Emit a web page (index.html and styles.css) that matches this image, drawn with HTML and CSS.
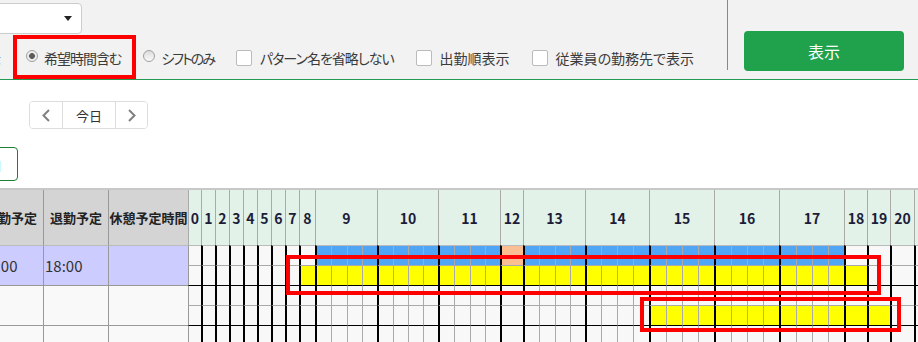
FILE: index.html
```html
<!DOCTYPE html>
<html lang="ja">
<head>
  <meta charset="UTF-8" />
  <meta name="viewport" content="width=device-width, initial-scale=1.0"/>
  <title>シフト表</title>
  <link rel="stylesheet" href="styles.css">
</head>
<body>
  <div class="page">

    <!-- 検索条件 -->
    <div class="filter-bar">
      <div class="filters">
        <div class="select-box"><span class="caret"></span></div>
        <div class="options">
          <span class="opt-label">表示</span>
          <label class="opt tight"><input type="radio" name="mode" checked />希望時間含む</label>
          <label class="opt tighter"><input type="radio" name="mode" />シフトのみ</label>
          <label class="opt box tight"><input type="checkbox" />パターン名を省略しない</label>
          <label class="opt box"><input type="checkbox" />出勤順表示</label>
          <label class="opt box"><input type="checkbox" />従業員の勤務先で表示</label>
        </div>
      </div>
      <div class="divider"></div>
      <div class="actions">
        <button class="btn-show">表示</button>
      </div>
    </div>

    <!-- 日付ナビ -->
    <div class="date-nav">
      <button class="nav-btn">
        <svg width="8" height="13" viewBox="0 0 8 13"><polyline points="7,1 1.5,6.5 7,12" fill="none" stroke="#808080" stroke-width="2"/></svg>
      </button>
      <button class="nav-btn today">今日</button>
      <button class="nav-btn">
        <svg width="8" height="13" viewBox="0 0 8 13"><polyline points="1,1 6.5,6.5 1,12" fill="none" stroke="#808080" stroke-width="2"/></svg>
      </button>
    </div>

    <div class="sub-actions">
      <button class="btn-outline">追加</button>
    </div>

    <!-- シフト表 -->
    <div class="schedule">
      <div class="staff">
        <div class="th">出勤予定</div>
        <div class="th">退勤予定</div>
        <div class="th">休憩予定時間</div>

        <div class="td plan">09:00</div>
        <div class="td plan">18:00</div>
        <div class="td plan"></div>

        <div class="td"></div>
        <div class="td"></div>
        <div class="td"></div>

        <div class="td"></div>
        <div class="td"></div>
        <div class="td"></div>
      </div>
      <div class="gantt" id="gantt"></div>
    </div>

    <!-- 注目枠 -->
    <div class="mark mark-option"></div>
    <div class="mark mark-row1"></div>
    <div class="mark mark-row2"></div>
  </div>

  <script>
    // hour, width(px), number of 15min cells
    const hours = [
      [0, 13, 1], [1, 14, 1], [2, 14, 1], [3, 14, 1], [4, 14, 1], [5, 14, 1],
      [6, 14, 1], [7, 14, 1], [8, 16, 1], [9, 62, 4], [10, 61, 4], [11, 62, 4],
      [12, 23, 1], [13, 62, 4], [14, 64, 4], [15, 65, 4], [16, 65, 4], [17, 65, 4],
      [18, 23, 1], [19, 23, 1], [20, 24, 1], [21, 30, 1]
    ];

    // two lines per employee: 希望 / 予定
    const rows = [
      [{ from: 9, to: 18, cls: "blue" }, { from: 12, to: 13, cls: "orange" }],
      [{ from: 8, to: 19, cls: "yellow" }],
      [],
      [{ from: 15, to: 20, cls: "yellow" }],
      [],
      []
    ];

    const gantt = document.getElementById("gantt");
    const cols = [];

    hours.forEach(([h, w, n]) => {
      const base = Math.floor(w / n);
      let rest = w - base * n;
      for (let i = 0; i < n; i++) {
        cols.push((base + (rest > 0 ? 1 : 0)) + "px");
        rest--;
      }
      const head = document.createElement("div");
      head.className = "hh";
      head.textContent = h;
      head.style.gridColumn = "span " + n;
      gantt.appendChild(head);
    });
    gantt.style.gridTemplateColumns = cols.join(" ");

    rows.forEach((bars, ri) => {
      hours.forEach(([h, w, n]) => {
        let color = "";
        bars.forEach(b => {
          if (h >= b.from && h < b.to) color = b.cls;
        });
        for (let i = 0; i < n; i++) {
          const cell = document.createElement("div");
          cell.className = "c";
          if (i === 0) cell.classList.add(h === 0 ? "first" : "hs");
          if (ri === 0) cell.classList.add("r1");
          else if (ri % 2 === 0) cell.classList.add("rt");
          if (color) cell.classList.add(color);
          gantt.appendChild(cell);
        }
      });
    });
  </script>
</body>
</html>
```

FILE: styles.css
```css
* {
  box-sizing: border-box;
}

html,
body {
  margin: 0;
  overflow: hidden;
}

body {
  font-family: "Noto Sans CJK JP", "Noto Sans", sans-serif;
  font-feature-settings: "palt";
  font-size: 14px;
  color: #333;
  background: #fff;
}

.page {
  position: relative;
  width: 918px;
  height: 342px;
  overflow: hidden;
}

/* filter bar */
.filter-bar {
  display: flex;
  height: 80px;
  background: #f2f2f2;
  border-bottom: 1px solid #239a52;
}

.filters {
  flex: 1;
  min-width: 0;
}

.select-box {
  display: flex;
  align-items: center;
  justify-content: flex-end;
  width: 120px;
  height: 31px;
  margin: 3px 0 0 -38px;
  padding-right: 9px;
  background: #fff;
  border: 1px solid #ccc;
  border-radius: 4px;
}

.caret {
  width: 0;
  height: 0;
  border-left: 4px solid transparent;
  border-right: 4px solid transparent;
  border-top: 5px solid #222;
}

.options {
  display: flex;
  align-items: center;
  height: 16px;
  margin: 16px 0 0 -27px;
  line-height: 16px;
  white-space: nowrap;
}

.opt-label {
  margin-right: 25px;
}

.opt {
  display: flex;
  align-items: center;
  gap: 6px;
  margin-right: 22px;
  color: #3a3a3a;
}

.opt.box {
  gap: 8px;
}

.opt.tight {
  letter-spacing: -1px;
}

.opt.tighter {
  letter-spacing: -2px;
}

.opt input {
  appearance: none;
  margin: 0;
}

.opt input[type="radio"] {
  width: 12px;
  height: 12px;
  margin-bottom: 4px;
  border: 1px solid #a0a0a0;
  border-radius: 50%;
  background: linear-gradient(#dcdcdc, #fafafa);
}

.opt input[type="radio"]:checked {
  background: radial-gradient(circle, #5c5c5c 0 2.6px, #ececec 3.2px);
}

.opt input[type="checkbox"] {
  width: 16px;
  height: 16px;
  border: 1px solid #bbb;
  border-radius: 2px;
  background: #fff;
}

.divider {
  flex: none;
  width: 1px;
  height: 70px;
  background: #888;
}

.actions {
  flex: none;
  padding: 31px 14px 0 16px;
}

.btn-show {
  width: 160px;
  height: 40px;
  background: #20a14c;
  color: #fff;
  border: none;
  border-radius: 4px;
  font-family: inherit;
  font-size: 16px;
}

/* date navigation */
.date-nav {
  display: flex;
  width: 119px;
  height: 28px;
  margin: 21px 0 0 29px;
  border: 1px solid #ddd;
  border-radius: 4px;
  overflow: hidden;
}

.nav-btn {
  display: flex;
  align-items: center;
  justify-content: center;
  width: 32px;
  padding: 0;
  background: #fff;
  border: none;
  border-left: 1px solid #ddd;
}

.nav-btn:first-child {
  border-left: none;
}

.nav-btn.today {
  width: 53px;
  font-family: inherit;
  font-size: 13px;
  color: #333;
}

.sub-actions {
  margin-top: 18px;
}

.btn-outline {
  display: block;
  width: 60px;
  height: 34px;
  margin-left: -42px;
  background: #fff;
  border: 1px solid #1e7e34;
  border-radius: 4px;
  font-family: inherit;
  font-size: 13px;
  color: #3aa;
}

/* schedule table */
.schedule {
  display: flex;
  margin: 7px 0 0 -22px;
  border-top: 2px solid #c8c8c8;
}

.staff {
  flex: none;
  display: grid;
  grid-template-columns: 65px 65px 80px;
  grid-template-rows: 55px 40px 40px 40px;
}

.staff .th {
  display: flex;
  align-items: center;
  justify-content: center;
  background: #d4d4d4;
  border-left: 1px solid #999;
  font-size: 13px;
  font-weight: bold;
  color: #222;
  white-space: nowrap;
}

.staff .td {
  display: flex;
  align-items: center;
  padding-left: 1px;
  background: #f9f9f9;
  border-left: 1px solid #999;
  border-top: 1px solid #999;
  font-size: 15px;
  color: #333;
}

.staff .td.plan {
  background: #ccccff;
  border-top-color: #bbb;
}

.gantt {
  flex: none;
  display: grid;
  grid-template-rows: 55px;
  grid-auto-rows: 20px;
}

.gantt .hh {
  display: flex;
  align-items: center;
  justify-content: center;
  background: #e2f2e8;
  border-left: 1px solid #aaa;
  font-size: 14px;
  font-weight: bold;
  color: #1c1c3a;
}

.gantt .c {
  background: #f8f8f8;
  border-left: 1px solid #aaa;
  border-top: 1px solid #aaa;
}

.gantt .c.first {
  border-left: 1px solid #999;
}

.gantt .c.hs {
  border-left: 2px solid #000;
}

.gantt .c.r1 {
  border-top-color: #bbb;
}

.gantt .c.rt {
  border-top-color: #000;
}

.gantt .c.blue {
  background: #50a5f5;
}

.gantt .c.orange {
  background: #fbbe92;
}

.gantt .c.yellow {
  background: #ffff00;
}

/* red highlight frames */
.mark {
  position: absolute;
  border: 4px solid #f00;
}

.mark-option {
  left: 13px;
  top: 35px;
  width: 123px;
  height: 44px;
}

.mark-row1 {
  left: 286px;
  top: 255px;
  width: 595px;
  height: 40px;
}

.mark-row2 {
  left: 640px;
  top: 297px;
  width: 261px;
  height: 35px;
}
```
